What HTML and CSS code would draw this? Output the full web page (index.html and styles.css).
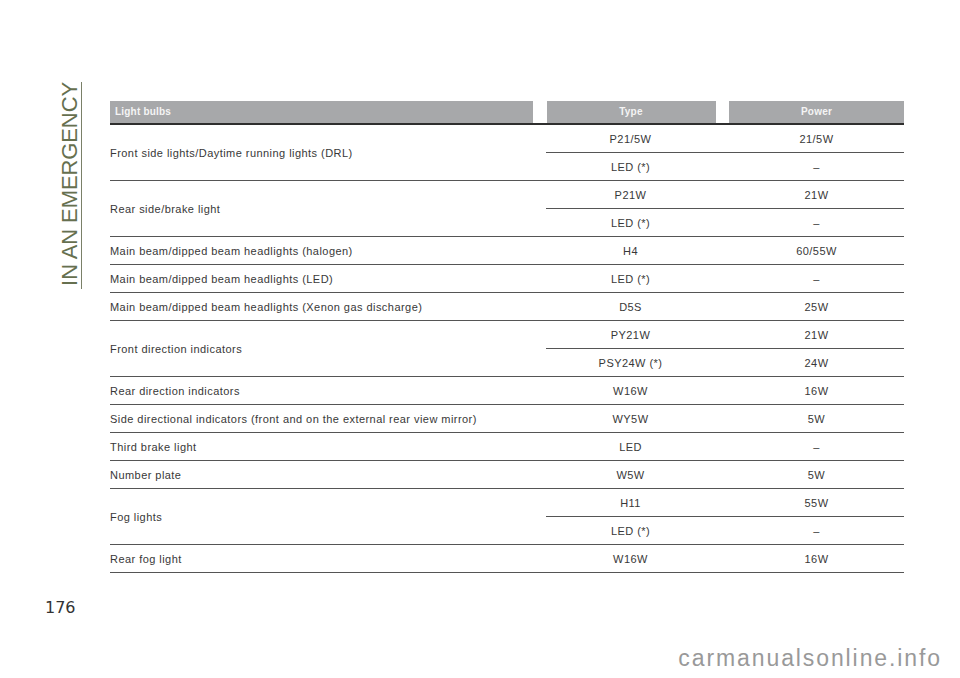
FILE: index.html
```html
<!DOCTYPE html>
<html>
<head>
<meta charset="utf-8">
<link rel="stylesheet" href="styles.css">
</head>
<body>
<div class="page">
  <div class="top">
    <div class="side"><div class="title">IN AN EMERGENCY</div></div>
    <div class="table">
      <div class="head">
        <div class="hcell hleft">Light bulbs</div>
        <div class="hcell">Type</div>
        <div class="hcell">Power</div>
      </div>

      <div class="group">
        <div class="name">Front side lights/Daytime running lights (DRL)</div>
        <div class="subs">
          <div class="sub"><div>P21/5W</div><div>21/5W</div></div>
          <div class="sub"><div>LED (*)</div><div>–</div></div>
        </div>
      </div>

      <div class="group">
        <div class="name">Rear side/brake light</div>
        <div class="subs">
          <div class="sub"><div>P21W</div><div>21W</div></div>
          <div class="sub"><div>LED (*)</div><div>–</div></div>
        </div>
      </div>

      <div class="group">
        <div class="name">Main beam/dipped beam headlights (halogen)</div>
        <div class="subs"><div class="sub"><div>H4</div><div>60/55W</div></div></div>
      </div>

      <div class="group">
        <div class="name">Main beam/dipped beam headlights (LED)</div>
        <div class="subs"><div class="sub"><div>LED (*)</div><div>–</div></div></div>
      </div>

      <div class="group">
        <div class="name">Main beam/dipped beam headlights (Xenon gas discharge)</div>
        <div class="subs"><div class="sub"><div>D5S</div><div>25W</div></div></div>
      </div>

      <div class="group">
        <div class="name">Front direction indicators</div>
        <div class="subs">
          <div class="sub"><div>PY21W</div><div>21W</div></div>
          <div class="sub"><div>PSY24W (*)</div><div>24W</div></div>
        </div>
      </div>

      <div class="group">
        <div class="name">Rear direction indicators</div>
        <div class="subs"><div class="sub"><div>W16W</div><div>16W</div></div></div>
      </div>

      <div class="group">
        <div class="name">Side directional indicators (front and on the external rear view mirror)</div>
        <div class="subs"><div class="sub"><div>WY5W</div><div>5W</div></div></div>
      </div>

      <div class="group">
        <div class="name">Third brake light</div>
        <div class="subs"><div class="sub"><div>LED</div><div>–</div></div></div>
      </div>

      <div class="group">
        <div class="name">Number plate</div>
        <div class="subs"><div class="sub"><div>W5W</div><div>5W</div></div></div>
      </div>

      <div class="group">
        <div class="name">Fog lights</div>
        <div class="subs">
          <div class="sub"><div>H11</div><div>55W</div></div>
          <div class="sub"><div>LED (*)</div><div>–</div></div>
        </div>
      </div>

      <div class="group">
        <div class="name">Rear fog light</div>
        <div class="subs"><div class="sub"><div>W16W</div><div>16W</div></div></div>
      </div>
    </div>
  </div>
  <div class="pagenum">176</div>
  <div class="watermark">carmanualsonline.info</div>
</div>
</body>
</html>
```

FILE: styles.css
```css
html, body {
  margin: 0;
  padding: 0;
  background: #ffffff;
}

.page {
  position: relative;
  width: 960px;
  height: 678px;
  overflow: hidden;
  font-family: "Liberation Sans", Arial, sans-serif;
  color: #383838;
}

.top {
  display: flex;
  align-items: flex-start;
  padding-top: 82px;
}

.side {
  margin-left: 56px;
  width: 25px;
  border-right: 1px solid #7a8068;
  padding-bottom: 3px;
  display: flex;
  justify-content: flex-end;
}

.title {
  writing-mode: vertical-rl;
  transform: rotate(180deg);
  white-space: nowrap;
  font-size: 22px;
  line-height: 22px;
  color: #66704f;
  letter-spacing: -0.1px;
}

.table {
  margin-left: 28px;
  margin-top: 19px;
  width: 794px;
  font-size: 11px;
  letter-spacing: 0.45px;
}

.head {
  display: grid;
  grid-template-columns: 423px 169px 175px;
  justify-content: space-between;
  border-bottom: 2px solid #2e2e2e;
}

.hcell {
  background: #a7a8aa;
  height: 22px;
  line-height: 22px;
  text-align: center;
  color: #f4f4f4;
  font-weight: bold;
  font-size: 10px;
  letter-spacing: 0.2px;
}

.hleft {
  text-align: left;
  padding-left: 5px;
}

.group {
  display: grid;
  grid-template-columns: 436px 358px;
  border-bottom: 1px solid #555555;
}

.name {
  display: flex;
  align-items: center;
  height: 100%;
}

.sub {
  display: grid;
  grid-template-columns: 169px 175px;
  justify-content: space-between;
  height: 27px;
  align-items: center;
  text-align: center;
}

.sub + .sub {
  border-top: 1px solid #555555;
}

.pagenum {
  margin-left: 45px;
  margin-top: 25px;
  font-family: "DejaVu Sans", sans-serif;
  font-size: 16px;
  color: #333333;
}

.watermark {
  position: absolute;
  right: 18px;
  bottom: 6px;
  font-family: "Liberation Sans", Arial, sans-serif;
  font-size: 23px;
  letter-spacing: 1.9px;
  color: #999999;
}
```
